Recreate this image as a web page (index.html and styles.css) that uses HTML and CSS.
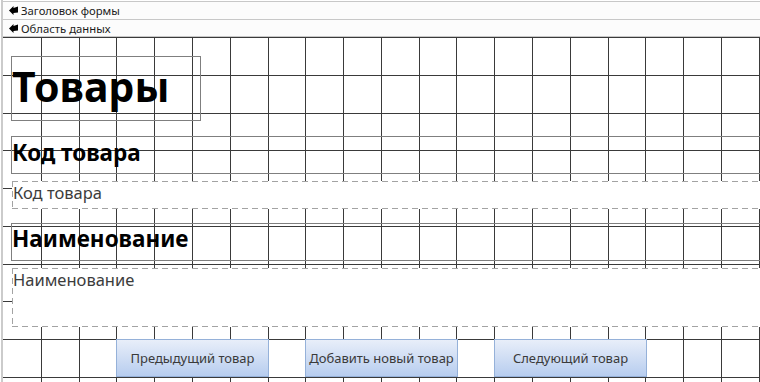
FILE: index.html
```html
<!DOCTYPE html>
<html lang="ru">
<head>
<meta charset="UTF-8">
<title>Товары - конструктор формы</title>
<link rel="stylesheet" href="styles.css">
</head>
<body>
<div class="frame">
<div class="bar bar-head">
<svg class="marker" width="9" height="9" viewBox="0 0 9 9"><path d="M0 4.5 L4.5 0 L4.5 2 L9 0.5 L9 6.5 L4.5 7 L4.5 9 Z" fill="#000"/></svg>
<span>Заголовок формы</span>
</div>
<div class="bar bar-detail">
<svg class="marker" width="9" height="9" viewBox="0 0 9 9"><path d="M0 4.5 L4.5 0 L4.5 2 L9 0.5 L9 6.5 L4.5 7 L4.5 9 Z" fill="#000"/></svg>
<span>Область данных</span>
</div>

<div class="design">
<svg class="grid" width="757" height="345">
<path d="M38.5 0V345M76.5 0V345M113.5 0V345M151.5 0V345M189.5 0V345M227.5 0V345M265.5 0V345M302.5 0V345M340.5 0V345M378.5 0V345M416.5 0V345M453.5 0V345M491.5 0V345M529.5 0V345M567.5 0V345M605.5 0V345M642.5 0V345M680.5 0V345M718.5 0V345M756.5 0V345" stroke="#3a3a3a" stroke-width="1"/>
<path d="M0 0.5H757M0 38.5H757M0 76.5H757M0 113.5H757M0 151.5H757M0 189.5H757M0 227.5H757M0 264.5H757M0 302.5H757M0 340.5H757" stroke="#3a3a3a" stroke-width="1"/>
</svg>

<div class="controls">
<div class="label title">Товары</div>
<div class="label caption code-caption">Код товара</div>
<div class="field code-field">Код товара</div>
<div class="label caption name-caption">Наименование</div>
<div class="field name-field">Наименование</div>
<div class="buttons">
<div class="btn">Предыдущий товар</div>
<div class="btn">Добавить новый товар</div>
<div class="btn">Следующий товар</div>
</div>
</div>
</div>
</div>
</body>
</html>
```

FILE: styles.css
```css
body {
margin: 0;
width: 760px;
height: 382px;
overflow: hidden;
background-color: #ffffff;
font-family: "Noto Sans", "Open Sans", sans-serif;
}

.frame {
margin-left: 1px;
padding-top: 1px;
border-left: 2px solid #cbcbcb;
height: 381px;
}

.bar {
display: flex;
align-items: center;
gap: 3px;
padding-left: 6px;
background-color: #fcfcfc;
border-top: 1px solid #c8c8c8;
font-size: 11.3px;
color: #1b1b1b;
}

.bar-head {
height: 17px;
}

.bar-detail {
height: 16px;
border-bottom: 1px solid #c8c8c8;
}

.marker {
display: block;
}

.design {
position: relative;
height: 345px;
overflow: hidden;
}

.grid {
position: absolute;
top: 0;
left: 0;
}

.controls {
position: relative;
display: flex;
flex-direction: column;
padding-left: 8px;
}

.label {
box-sizing: border-box;
border: 1px solid #7f7f7f;
color: #000000;
font-weight: bold;
white-space: nowrap;
}

.title {
margin-top: 19px;
width: 190px;
height: 65px;
padding-bottom: 6px;
font-size: 41px;
line-height: 58px;
}

.caption {
width: 820px;
height: 38px;
font-size: 22.5px;
}

.code-caption {
margin-top: 15px;
line-height: 32px;
padding-bottom: 4px;
}

.name-caption {
margin-top: 14px;
line-height: 30px;
padding-bottom: 6px;
}

.field {
box-sizing: border-box;
margin-left: 1px;
width: 820px;
padding-left: 1px;
font-size: 16.5px;
line-height: 24px;
color: #3c3c3c;
background:
repeating-linear-gradient(90deg, #a3a3a3 0 6px, transparent 6px 10px) top left / 100% 1px no-repeat,
repeating-linear-gradient(90deg, #a3a3a3 0 6px, transparent 6px 10px) bottom left / 100% 1px no-repeat,
repeating-linear-gradient(180deg, #a3a3a3 0 6px, transparent 6px 10px) top left / 1px 100% no-repeat,
#ffffff;
}

.code-field {
margin-top: 7px;
height: 28px;
}

.name-field {
margin-top: 7px;
height: 59px;
}

.buttons {
display: flex;
gap: 36px;
margin-top: 12px;
margin-left: 105px;
}

.btn {
box-sizing: border-box;
display: flex;
align-items: center;
justify-content: center;
width: 153px;
height: 38px;
border: 1px solid #95b1d9;
background: linear-gradient(#e8eef9, #b7cdef);
font-size: 13px;
color: #3a3a3a;
white-space: nowrap;
}
```
